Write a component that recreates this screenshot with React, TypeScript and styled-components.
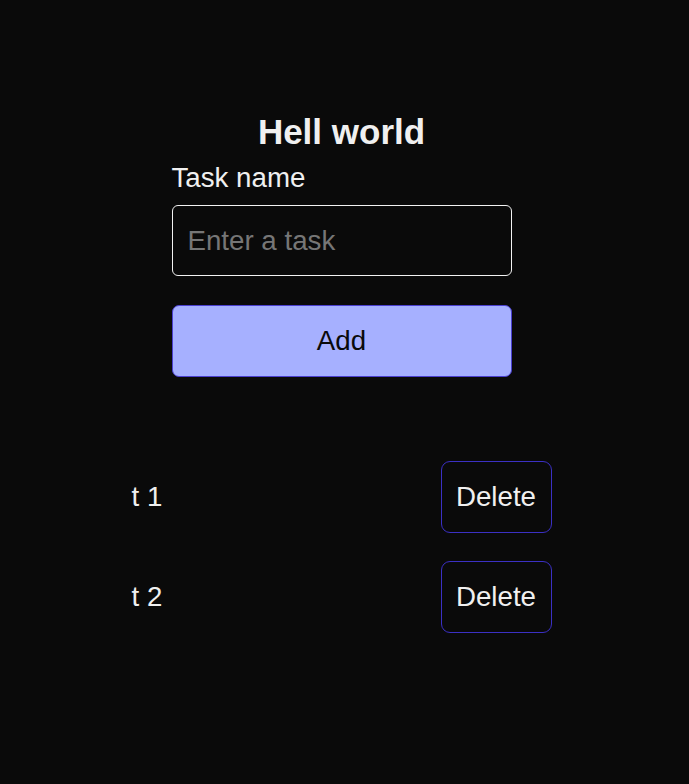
import React, { useState } from "react";
import styled, { createGlobalStyle } from "styled-components";

const Global = createGlobalStyle`
  html, body {
    margin: 0;
    padding: 0;
    background: #0a0a0a;
    color: #ededed;
    font-family: "Liberation Sans", Arial, sans-serif;
  }
  * { box-sizing: border-box; }
`;

const Page = styled.main`
  min-height: 784px;
  display: flex;
  flex-direction: column;
  align-items: center;
  padding: 112px 6px 0 0;
`;

const Form = styled.form`
  width: 340px;
  display: flex;
  flex-direction: column;
`;

const Title = styled.h1`
  margin: 0;
  font-size: 35px;
  line-height: 40px;
  font-weight: 700;
  text-align: center;
  color: #f0f0f0;
`;

const Label = styled.label`
  margin-top: 10px;
  font-size: 27.7px;
  line-height: 31px;
  color: #f0f0f0;
`;

const Input = styled.input`
  margin-top: 12px;
  height: 71px;
  width: 100%;
  padding: 0 15px;
  border: 1px solid #f2f2f2;
  border-radius: 6px;
  background: #0a0a0a;
  color: #f0f0f0;
  font-family: inherit;
  font-size: 27.7px;
  outline: none;
  &::placeholder { color: #767676; }
`;

const AddButton = styled.button`
  margin-top: 29px;
  height: 72px;
  width: 100%;
  border: 1px solid #4a3fd0;
  border-radius: 7px;
  background: #a6b0ff;
  color: #0a0a0a;
  font-family: inherit;
  font-size: 27.7px;
  cursor: pointer;
`;

const List = styled.ul`
  list-style: none;
  margin: 84px 0 0;
  padding: 0;
  width: 420px;
  display: flex;
  flex-direction: column;
  gap: 28px;
`;

const Row = styled.li`
  display: flex;
  align-items: center;
  justify-content: space-between;
  height: 72px;
`;

const TaskText = styled.span`
  font-size: 27.7px;
  color: #f0f0f0;
`;

const DeleteButton = styled.button`
  height: 72px;
  width: 111px;
  padding: 0;
  border: 1px solid #3b30c4;
  border-radius: 9px;
  background: #0a0a0a;
  color: #f0f0f0;
  font-family: inherit;
  font-size: 27.7px;
  cursor: pointer;
`;

export default function App() {
  const [tasks, setTasks] = useState<string[]>(["t 1", "t 2"]);
  const [value, setValue] = useState("");

  return (
    <>
      <Global />
      <Page>
        <Form
          onSubmit={(e) => {
            e.preventDefault();
            if (value.trim()) {
              setTasks([...tasks, value.trim()]);
              setValue("");
            }
          }}
        >
          <Title>Hell world</Title>
          <Label htmlFor="task">Task name</Label>
          <Input
            id="task"
            placeholder="Enter a task"
            value={value}
            onChange={(e) => setValue(e.target.value)}
          />
          <AddButton type="submit">Add</AddButton>
        </Form>
        <List>
          {tasks.map((t, i) => (
            <Row key={i}>
              <TaskText>{t}</TaskText>
              <DeleteButton onClick={() => setTasks(tasks.filter((_, j) => j !== i))}>
                Delete
              </DeleteButton>
            </Row>
          ))}
        </List>
      </Page>
    </>
  );
}
